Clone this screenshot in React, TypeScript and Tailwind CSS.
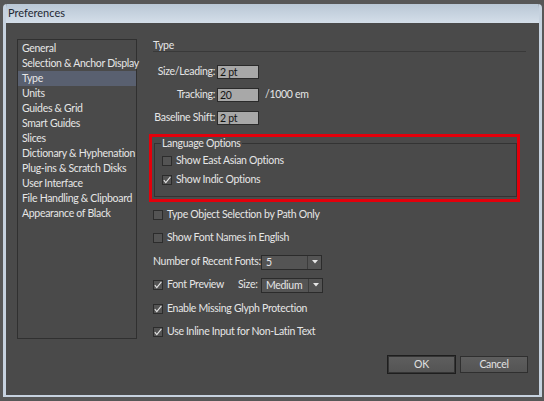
import React from 'react';

const navItems = [
  'General',
  'Selection & Anchor Display',
  'Type',
  'Units',
  'Guides & Grid',
  'Smart Guides',
  'Slices',
  'Dictionary & Hyphenation',
  'Plug-ins & Scratch Disks',
  'User Interface',
  'File Handling & Clipboard',
  'Appearance of Black',
];

const Check: React.FC<{ checked?: boolean }> = ({ checked }) => (
  <span className="w-[10px] h-[10px] shrink-0 border border-[#2c2c2c] bg-[#545454] flex items-center justify-center">
    {checked && (
      <svg width="8" height="8" viewBox="0 0 8 8">
        <path d="M0.8 4.2 L2.8 6.6 L7.4 0.8" fill="none" stroke="#e4e4e4" strokeWidth="1.1" />
      </svg>
    )}
  </span>
);

const CheckRow: React.FC<{ checked?: boolean; label: string; className?: string }> = ({ checked, label, className }) => (
  <div className={`flex items-center h-[16px] gap-[4px] ${className ?? ''}`}>
    <Check checked={checked} />
    <span>{label}</span>
  </div>
);

const Field: React.FC<{ value: string }> = ({ value }) => (
  <div className="w-[42px] h-[14px] bg-[#a8a8a8] border border-[#2a2a2a] text-[#141414] leading-[12px] pl-[2px]">
    {value}
  </div>
);

const Dropdown: React.FC<{ value: string; width: string }> = ({ value, width }) => (
  <div className={`${width} h-[15px] flex border border-[#2b2b2b] bg-[#545454]`}>
    <span className="flex-1 pl-[4px] leading-[13px]">{value}</span>
    <span className="w-[14px] border-l border-[#3c3c3c] flex items-center justify-center">
      <svg width="6" height="4" viewBox="0 0 6 4">
        <path d="M0 0 H6 L3 3.5 Z" fill="#e6e6e6" />
      </svg>
    </span>
  </div>
);

export default function App() {
  return (
    <div
      className="w-[544px] h-[401px] bg-[#575757] pt-[4px] pl-[3px] pr-[2px] text-[10.5px] tracking-[-0.3px] text-[#e6e6e6]"
      style={{ fontFamily: 'Lato, "Liberation Sans", sans-serif' }}
    >
      <div className="h-[393px] flex flex-col rounded-t-[4px] border-x-[3px] border-b-[2px] border-[#c6d2df] overflow-hidden">
        {/* title bar */}
        <div className="h-[19px] shrink-0 bg-gradient-to-b from-[#b9c7d5] to-[#d4dee9] flex items-center pl-[2px] text-[#1f2833] text-[11px] tracking-normal">
          Preferences
        </div>

        {/* body */}
        <div className="flex-1 bg-[#4a4a4a] flex flex-col pl-[11px] pr-[11px] pt-[16px] pb-[21px]">
          <div className="flex-1 flex gap-[16px]">
            {/* sidebar list */}
            <div className="w-[120px] h-[300px] border border-[#303030] pt-[1px]">
              {navItems.map(item => (
                <div
                  key={item}
                  className={`h-[15px] leading-[15px] pl-[4px] whitespace-nowrap ${item === 'Type' ? 'bg-[#596070]' : ''}`}
                >
                  {item}
                </div>
              ))}
            </div>

            {/* settings panel */}
            <div className="flex-1 flex flex-col pt-[1px]">
              <div className="h-[12px] leading-[10px] border-b border-[#393939] mr-[2px]">Type</div>

              <div className="flex flex-col gap-[9px] mt-[13px]">
                <div className="flex items-center h-[14px] gap-[2px]">
                  <span className="w-[62px] text-right whitespace-nowrap">Size/Leading:</span>
                  <Field value="2 pt" />
                </div>
                <div className="flex items-center h-[14px] gap-[2px]">
                  <span className="w-[62px] text-right whitespace-nowrap">Tracking:</span>
                  <Field value="20" />
                  <span className="ml-[4px]">/1000 em</span>
                </div>
                <div className="flex items-center h-[14px] gap-[2px]">
                  <span className="w-[62px] text-right whitespace-nowrap">Baseline Shift:</span>
                  <Field value="2 pt" />
                </div>
              </div>

              {/* Language options, highlighted */}
              <div className="-ml-[4px] mt-[9px] w-[371px] h-[68px] border-[3px] border-[#e3000b] pl-[2px] pb-[2px]">
                <fieldset className="h-full border border-[#333333] pl-[7px]">
                  <legend className="px-[1px] -ml-[1px] leading-[12px]">Language Options</legend>
                  <div className="flex flex-col gap-[3px] mt-[4px]">
                    <CheckRow label="Show East Asian Options" />
                    <CheckRow checked label="Show Indic Options" />
                  </div>
                </fieldset>
              </div>

              <div className="flex flex-col mt-[5px]">
                <CheckRow label="Type Object Selection by Path Only" />
                <CheckRow label="Show Font Names in English" className="mt-[7px]" />
                <div className="flex items-center h-[16px] mt-[8px]">
                  <span className="w-[108px] whitespace-nowrap">Number of Recent Fonts:</span>
                  <Dropdown value="5" width="w-[61px]" />
                </div>
                <div className="flex items-center h-[16px] mt-[7px]">
                  <div className="w-[85px] flex items-center gap-[4px]">
                    <Check checked />
                    <span>Font Preview</span>
                  </div>
                  <span className="w-[23px]">Size:</span>
                  <Dropdown value="Medium" width="w-[62px]" />
                </div>
                <CheckRow checked label="Enable Missing Glyph Protection" className="mt-[8px]" />
                <CheckRow checked label="Use Inline Input for Non-Latin Text" className="mt-[7px]" />
              </div>
            </div>
          </div>

          {/* buttons */}
          <div className="flex justify-end items-center gap-[4px]">
            <div className="border border-[#1e1e1e]">
              <button className="w-[67px] h-[17px] border border-[#343434] bg-gradient-to-b from-[#5e5e5e] to-[#545454] text-[#e2e2e2] leading-[15px]">
                OK
              </button>
            </div>
            <button className="w-[68px] h-[17px] border border-[#2f2f2f] bg-gradient-to-b from-[#5e5e5e] to-[#545454] text-[#e2e2e2] leading-[15px]">
              Cancel
            </button>
          </div>
        </div>
      </div>
    </div>
  );
}
